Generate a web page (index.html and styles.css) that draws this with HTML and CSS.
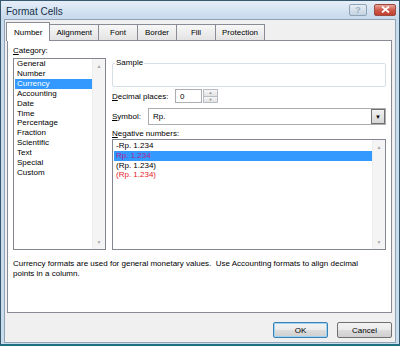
FILE: index.html
```html
<!DOCTYPE html>
<html lang="en">
<head>
    <meta charset="UTF-8">
    <title>Format Cells</title>
    <link rel="stylesheet" href="styles.css">
</head>
<body>
    <div class="window">
        <div class="titlebar">
            <span class="title">Format Cells</span>
            <div class="caption-buttons">
                <span class="cap-btn help">?</span>
                <span class="cap-btn close">
                    <svg width="9" height="7" viewBox="0 0 9 7"><path d="M1 0.5 L8 6.5 M8 0.5 L1 6.5" stroke="#fff" stroke-width="1.8"/></svg>
                </span>
            </div>
        </div>

        <div class="dialog">
            <!-- Tab strip -->
            <div class="tabs">
                <span class="tab active">Number</span>
                <span class="tab">Alignment</span>
                <span class="tab">Font</span>
                <span class="tab">Border</span>
                <span class="tab">Fill</span>
                <span class="tab">Protection</span>
            </div>

            <div class="panel">
                <div class="panel-grid">
                    <div class="label"><u>C</u>ategory:</div>
                    <div></div>

                    <div class="listbox category">
                        <ul class="items">
                            <li>General</li>
                            <li>Number</li>
                            <li class="selected">Currency</li>
                            <li>Accounting</li>
                            <li>Date</li>
                            <li>Time</li>
                            <li>Percentage</li>
                            <li>Fraction</li>
                            <li>Scientific</li>
                            <li>Text</li>
                            <li>Special</li>
                            <li>Custom</li>
                        </ul>
                        <div class="scrollbar">
                            <span class="arrow">&#9650;</span>
                            <span class="arrow">&#9660;</span>
                        </div>
                    </div>

                    <div class="right">
                        <fieldset class="sample">
                            <legend>Sample</legend>
                            <div class="sample-body"></div>
                        </fieldset>

                        <div class="row decimal">
                            <span class="row-label"><u>D</u>ecimal places:</span>
                            <span class="textbox small">0</span>
                            <span class="spinner">
                                <span class="spin">&#9650;</span>
                                <span class="spin">&#9660;</span>
                            </span>
                        </div>

                        <div class="row symbol">
                            <span class="row-label sym"><u>S</u>ymbol:</span>
                            <span class="combo">
                                <span class="combo-text">Rp.</span>
                                <span class="combo-btn">&#9660;</span>
                            </span>
                        </div>

                        <div class="label neg-label"><u>N</u>egative numbers:</div>

                        <div class="listbox negative">
                            <ul class="items">
                                <li>-Rp. 1.234</li>
                                <li class="selected red">Rp. 1.234</li>
                                <li>(Rp. 1.234)</li>
                                <li class="red">(Rp. 1.234)</li>
                            </ul>
                            <div class="scrollbar">
                                <span class="arrow">&#9650;</span>
                                <span class="arrow">&#9660;</span>
                            </div>
                        </div>
                    </div>
                </div>

                <p class="desc">Currency formats are used for general monetary values.&nbsp; Use Accounting formats to align decimal points in a column.</p>
            </div>

            <div class="footer">
                <button class="btn default">OK</button>
                <button class="btn">Cancel</button>
            </div>
        </div>
    </div>
</body>
</html>
```

FILE: styles.css
```css
/* Classic Windows dialog look */
body {
    margin: 0;
    font-family: 'Liberation Sans', Arial, sans-serif;
    font-size: 8px;
    color: #000;
    background: #fff;
}

.window {
    width: 400px;
    height: 346px;
    box-sizing: border-box;
    border: 1px solid #35586f;
    border-bottom: 2px solid #1f6e84;
    background: #c9dcec;
    padding: 0 3px 1px 3px;
    display: flex;
    flex-direction: column;
}

.titlebar {
    height: 18px;
    display: flex;
    align-items: center;
    justify-content: space-between;
    background: linear-gradient(to bottom, #e4eef8, #c7d9eb);
    margin: 0 -3px;
    padding: 0 3px 0 5px;
}

.title {
    font-size: 10px;
    color: #15304a;
    padding-top: 2px;
}

.caption-buttons {
    display: flex;
    gap: 7px;
    margin-top: -1px;
}

.cap-btn {
    height: 10px;
    border: 1px solid #8ea3b7;
    border-radius: 2px;
    display: flex;
    align-items: center;
    justify-content: center;
    box-sizing: content-box;
}

.help {
    width: 16px;
    background: linear-gradient(to bottom, #e7eef6, #c4d2e0);
    color: #9aafc2;
    font-size: 9px;
    font-weight: bold;
}

.close {
    width: 20px;
    border-color: #9a4a40;
    background: linear-gradient(to bottom, #e8a597, #cf5a4c 50%, #c0402f);
}

.dialog {
    flex: 1;
    background: #f0f0f0;
    border: 1px solid #8fa4b6;
    display: flex;
    flex-direction: column;
}

/* Tabs */
.tabs {
    display: flex;
    align-items: flex-end;
    height: 18px;
    margin: 3px 0 -1px 1px;
    position: relative;
    z-index: 1;
}

.tab {
    height: 15px;
    min-width: 26px;
    padding: 0 6px;
    margin-bottom: 1px;
    margin-left: -1px;
    border: 1px solid #898c95;
    border-bottom: none;
    background: linear-gradient(to bottom, #f7f7f7, #e3e3e3);
    display: flex;
    align-items: center;
    justify-content: center;
}

.tab.active {
    height: 18px;
    margin-bottom: 0;
    margin-left: 0;
    padding: 0 7px;
    background: #fff;
}

.tab.active + .tab {
    margin-left: 0;
    border-left: none;
}

/* Main white panel */
.panel {
    height: 273px;
    box-sizing: border-box;
    margin: 0 3px 0 2px;
    border: 1px solid #898c95;
    background: #fff;
    padding: 5px 5px 0 5px;
}

.panel-grid {
    display: grid;
    grid-template-columns: 93px 274px;
    grid-template-rows: 12px 192px;
    column-gap: 6px;
}

.label {
    line-height: 10px;
}

.listbox {
    border: 1px solid #828790;
    display: flex;
    box-sizing: border-box;
}

.items {
    list-style: none;
    margin: 0;
    padding: 0;
    flex: 1;
}

.category .items li {
    line-height: 9.9px;
    padding-left: 2px;
    margin-left: 1px;
}

.negative .items {
    padding-top: 1px;
}

.negative .items li {
    line-height: 9.8px;
    padding-left: 2px;
    margin-left: 1px;
}

.items li.selected {
    background: #3399ff;
    color: #fff;
}

.items li.red {
    color: #e8202a;
}

.items li.selected.red {
    color: #b0238e;
}

.scrollbar {
    width: 12px;
    background: #f4f4f4;
    border-left: 1px solid #ececec;
    display: flex;
    flex-direction: column;
    justify-content: space-between;
    align-items: center;
    padding: 4px 0;
}

.arrow {
    font-size: 5px;
    color: #a8a8a8;
}

.right {
    display: flex;
    flex-direction: column;
}

.sample {
    margin: 0;
    padding: 0 2px;
    border: 1px solid #d5dfe5;
    border-radius: 2px;
}

.sample legend {
    padding: 0 1px;
    margin-left: 0;
    line-height: 10px;
}

.sample-body {
    height: 18px;
}

.row {
    display: flex;
    align-items: center;
}

.decimal {
    margin-top: 2px;
    height: 14px;
}

.row-label {
    width: 63px;
}

.row-label.sym {
    width: 36px;
}

.textbox {
    height: 14px;
    box-sizing: border-box;
    border: 1px solid #abadb3;
    display: flex;
    align-items: center;
    padding-left: 4px;
}

.textbox.small {
    width: 27px;
}

.spinner {
    width: 15px;
    height: 14px;
    display: flex;
    flex-direction: column;
    margin-left: 1px;
}

.spin {
    flex: 1;
    border: 1px solid #b8bcc4;
    background: linear-gradient(to bottom, #f6f6f6, #e2e2e2);
    font-size: 4px;
    color: #8d8d8d;
    display: flex;
    align-items: center;
    justify-content: center;
}

.spin + .spin {
    border-top: none;
}

.symbol {
    margin-top: 5px;
    height: 17px;
}

.combo {
    flex: 1;
    height: 17px;
    box-sizing: border-box;
    border: 1px solid #abadb3;
    display: flex;
}

.combo-text {
    flex: 1;
    padding-left: 4px;
    display: flex;
    align-items: center;
}

.combo-btn {
    width: 12px;
    border: 1px solid #707070;
    margin: 0;
    background: linear-gradient(to bottom, #f2f2f2, #d6d6d6);
    font-size: 6px;
    display: flex;
    align-items: center;
    justify-content: center;
}

.neg-label {
    margin-top: 3px;
    height: 11px;
    line-height: 11px;
}

.negative {
    flex: 1;
}

.desc {
    margin: 9px 0 0 0;
    line-height: 10px;
    width: 360px;
}

/* Bottom buttons */
.footer {
    display: flex;
    justify-content: flex-end;
    gap: 9px;
    margin: 9px 3px 0 0;
}

.btn {
    width: 55px;
    height: 16px;
    padding: 0;
    font-family: inherit;
    font-size: 8px;
    color: #000;
    border: 1px solid #707070;
    border-radius: 2px;
    background: linear-gradient(to bottom, #f2f2f2 0%, #ebebeb 50%, #dddddd 51%, #cfcfcf 100%);
}

.btn.default {
    border-color: #3c7fb1;
    box-shadow: inset 0 0 0 1px #9bd3f5;
}
```
